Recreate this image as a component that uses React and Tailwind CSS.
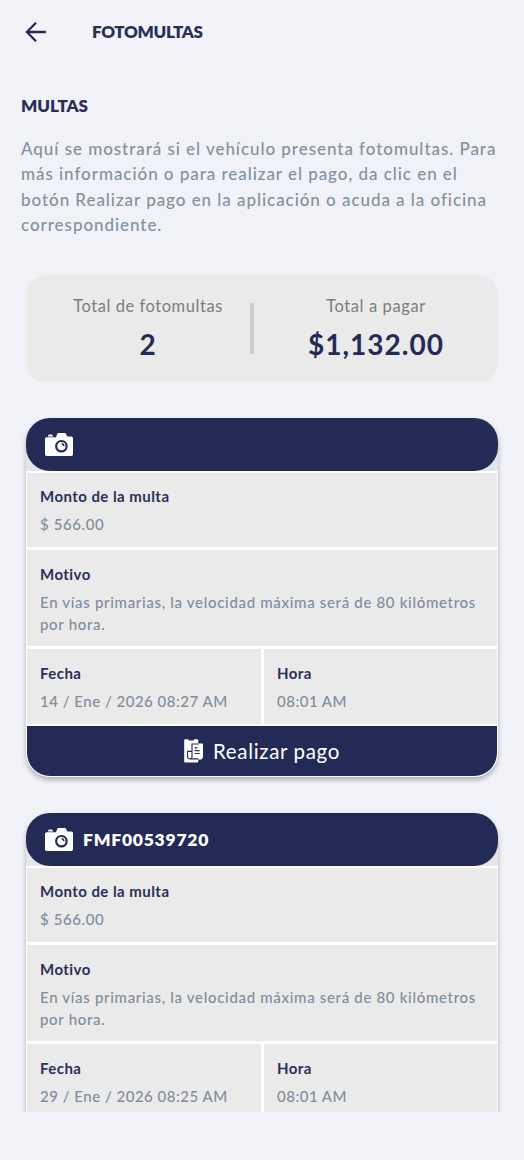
import React from "react";

function CameraIcon() {
  return (
    <svg className="h-[23px] w-7 shrink-0" viewBox="0 0 28 23" fill="none">
      <path
        d="M1.800 4.300H11l1.200-3.200C12.500.4 12.800 0 13.500 0h6.300c.7 0 1 .4 1.300 1.100l1.100 2.400H26.200c1.100 0 1.800.7 1.800 1.800V21.300c0 1-.7 1.700-1.700 1.700H1.700C.7 23 0 22.300 0 21.300V6.100c0-1.100.7-1.800 1.800-1.800Z"
        fill="#fff"
      />
      <path d="M3 3.500c.1-1.200.6-1.900 1.400-1.900h2.100c.8 0 1.400.7 1.500 1.900Z" fill="#fff" />
      <circle cx="16.400" cy="13.200" r="5.200" stroke="#232a56" strokeWidth="2.200" />
      <path d="M16.600 10.700a2.600 2.600 0 0 1 2.300 2.400" stroke="#232a56" strokeWidth="1.400" />
    </svg>
  );
}

function PaymentIcon() {
  return (
    <svg className="h-6 w-[19px] shrink-0" viewBox="0 0 19 24" fill="none">
      <path d="M1.500.3h2.800c.2.900.6 1.200 1.400 1.200h3.100c.8 0 1.200-.3 1.400-1.200H13c.8 0 1.300.5 1.300 1.300v20.600c0 .8-.5 1.300-1.300 1.300H1.500c-.8 0-1.300-.5-1.300-1.300V1.600C.2.800.7.300 1.500.3Z" fill="#fff" />
      <path d="M8 4.500h10c.6 0 1 .4 1 1v12c0 1.900-1.200 3.100-3.200 3.100H5.800c-1.800 0-2.800-1-2.800-2.600v-6.100h5Z" fill="#fff" />
      <path d="M14.800 5H8v13.200c0 1.100-.6 1.700-1.700 1.700-1.700 0-2.700-.8-2.700-2.200v-5.300H8M6.300 19.900h8" stroke="#232a56" strokeWidth="1.100" />
      <path d="M10.600 8.800h2.900M10.600 11.700h5M10.600 14.500h5" stroke="#232a56" strokeWidth="1.200" />
    </svg>
  );
}

function Field({ label, children, className = "", valueClass = "tracking-[0.5px]" }) {
  return (
    <div className={`flex flex-col gap-1.5 bg-[#eaeaea] pb-3 pl-[13px] pr-3 ${className}`}>
      <div className="text-[15px] font-bold leading-[22px] tracking-[0.450px] text-[#2b3058]">{label}</div>
      <div className={`whitespace-pre-line text-[15px] font-medium leading-[22px] text-[#7f8d9c] ${valueClass}`}>{children}</div>
    </div>
  );
}

function FineCard({ folio, amount, reason, date, time }) {
  return (
    <article className="shrink-0 rounded-[24px] bg-[#e4e5e9] shadow-[0_3px_5px_rgba(0,0,0,0.28)]">
      <header className="flex h-[53px] items-center gap-2.5 rounded-[24px] bg-[#232a56] pl-[19px]">
        <CameraIcon />
        <span className="text-[17.500px] font-extrabold leading-6 tracking-[0.750px] text-white">{folio}</span>
      </header>
      <div className="overflow-hidden rounded-b-[24px] border-x border-b border-[#fafafa] bg-white pt-0.5">
        <div className="flex flex-col gap-[3px]">
          <Field label="Monto de la multa" className="h-[74px] pt-3" valueClass="tracking-[0.6px]">{amount}</Field>
          <Field label="Motivo" className="h-[96px] pt-[13px]" valueClass="tracking-[0.68px]">{reason}</Field>
          <div className="grid grid-cols-[234px_1fr] gap-[3px]">
            <Field label="Fecha" className="h-[75px] pt-[13px]">{date}</Field>
            <Field label="Hora" className="h-[75px] pt-[13px]">{time}</Field>
          </div>
        </div>
        <button className="mt-0.5 flex h-[50px] w-full items-center justify-center gap-2.5 bg-[#232a56]">
          <PaymentIcon />
          <span className="text-[20.500px] leading-6 tracking-[0.650px] text-white">Realizar pago</span>
        </button>
      </div>
    </article>
  );
}

const fines = [
  { folio: "", amount: "$ 566.00", date: "14 / Ene / 2026 08:27 AM", time: "08:01 AM" },
  { folio: "FMF00539720", amount: "$ 566.00", date: "29 / Ene / 2026 08:25 AM", time: "08:01 AM" },
];

const reason = "En vías primarias, la velocidad máxima será de 80 kilómetros\npor hora.";

export default function App() {
  return (
    <div className="flex h-[1160px] w-[524px] flex-col overflow-hidden bg-[#f1f2f8] pb-12 font-['Lato',sans-serif]">
      <header className="flex h-[68px] shrink-0 items-center gap-[45px] bg-[#f3f2f8] pb-1 pl-[25px]">
        <svg className="h-[22px] w-[22px]" viewBox="0 0 22 22" fill="none" stroke="#232a56" strokeWidth="2.300">
          <path d="M21 11H2.500M11 1.800 1.900 11l9.100 9.200" />
        </svg>
        <h1 className="text-[17px] font-extrabold leading-6 tracking-[-0.350px] text-[#2a2f58]">FOTOMULTAS</h1>
      </header>

      <main className="flex min-h-0 flex-1 flex-col overflow-hidden">
        <section className="shrink-0 px-[21px] pt-[26px]">
          <h2 className="text-[17px] font-extrabold leading-6 tracking-[-0.050px] text-[#2a2f58]">MULTAS</h2>
          <p className="mt-[17.500px] whitespace-pre-line text-[17px] font-medium leading-[25.600px] tracking-[0.950px] text-[#82909f]">
            {"Aquí se mostrará si el vehículo presenta fotomultas. Para\nmás información o para realizar el pago, da clic en el\nbotón Realizar pago en la aplicación o acuda a la oficina\ncorrespondiente."}
          </p>
        </section>

        <div className="mt-[37.500px] flex shrink-0 flex-col pl-[26px] pr-[26px]">
          <section className="flex h-[107px] items-center rounded-[20px] bg-[#eaeaea]">
            <div className="flex w-[224px] flex-col items-center gap-1 pl-5 pt-0.5">
              <span className="text-[16.500px] leading-6 tracking-[0.550px] text-[#7d7d7d]">Total de fotomultas</span>
              <strong className="text-[28px] font-bold leading-[44px] tracking-[1px] text-[#232a56]">2</strong>
            </div>
            <div className="h-[51px] w-1 shrink-0 bg-[#cdcdcd]" />
            <div className="flex flex-1 flex-col items-center gap-1 pt-0.5">
              <span className="text-[16.500px] leading-6 tracking-[0.6px] text-[#7d7d7d]">Total a pagar</span>
              <strong className="text-[28px] font-bold leading-[44px] tracking-[1px] text-[#232a56]">$1,132.00</strong>
            </div>
          </section>
          <div className="mt-9 flex flex-col gap-9">
            {fines.map((fine) => (
              <FineCard key={fine.date} {...fine} reason={reason} />
            ))}
          </div>
        </div>
      </main>
    </div>
  );
}
